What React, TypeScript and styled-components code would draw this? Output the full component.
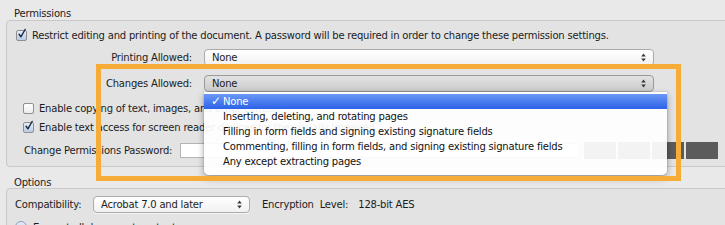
import React from 'react'
import styled, { createGlobalStyle } from 'styled-components'

const GlobalStyle = createGlobalStyle`
  body {
    margin: 0;
    background: #e9e9e9;
    font-family: "DejaVu Sans", "Liberation Sans", sans-serif;
    font-size: 10px;
    letter-spacing: -0.2px;
    color: #1c1c1c;
  }
`

const Page = styled.div`
  position: relative;
  width: 725px;
  height: 225px;
  overflow: hidden;
  background: #e9e9e9;
`

const SectionTitle = styled.div<{ $pad: number; $h: number }>`
  display: flex;
  align-items: center;
  box-sizing: border-box;
  height: ${p => p.$h}px;
  padding: ${p => p.$pad}px 0 0 14px;
  color: #222;
`

const GroupBox = styled.div<{ $pad: string }>`
  margin: 0 -20px 0 6px;
  border: 1px solid #c9c9c9;
  border-radius: 4px;
  background: #e3e3e3;
  padding: ${p => p.$pad};
`

const Row = styled.div<{ $top: number; $h: number; $indent?: number }>`
  display: flex;
  align-items: center;
  height: ${p => p.$h}px;
  margin-top: ${p => p.$top}px;
  padding-left: ${p => p.$indent || 0}px;
  white-space: nowrap;
`

const Box = styled.span<{ $checked?: boolean }>`
  display: inline-flex;
  align-items: center;
  justify-content: center;
  width: 11px;
  height: 11px;
  box-sizing: border-box;
  border: 1px solid #8f8f8f;
  border-radius: 2px;
  background: ${p => (p.$checked ? 'linear-gradient(#e4eefa, #b9cde6)' : 'linear-gradient(#ffffff, #ececec)')};
  margin-right: 5px;
  overflow: visible;
`

const Radio = styled.span`
  display: inline-block;
  width: 12px;
  height: 12px;
  box-sizing: border-box;
  border: 1px solid #8a9ab5;
  border-radius: 50%;
  background: linear-gradient(#e6eefa, #b5c8e4);
  margin-right: 6px;
`

const FieldLabel = styled.span<{ $w: number; $align?: string }>`
  display: inline-block;
  width: ${p => p.$w}px;
  text-align: ${p => p.$align || 'right'};
  flex-shrink: 0;
`

const Select = styled.div<{ $w: number; $pressed?: boolean; $ml: number }>`
  display: flex;
  align-items: center;
  justify-content: space-between;
  box-sizing: border-box;
  width: ${p => p.$w}px;
  height: 17px;
  margin-left: ${p => p.$ml}px;
  padding: 0 7px 0 7px;
  border: 1px solid ${p => (p.$pressed ? '#9a9a9a' : '#ababab')};
  border-radius: 4px;
  background: ${p =>
    p.$pressed ? 'linear-gradient(#e2e2e2, #cbcbcb)' : 'linear-gradient(#ffffff, #f1f1f1)'};
  box-shadow: 0 1px 0 rgba(255, 255, 255, 0.6);
  flex-shrink: 0;
`

const Input = styled.div`
  width: 400px;
  height: 15px;
  box-sizing: border-box;
  border: 1px solid #b5b5b5;
  background: #fff;
  flex-shrink: 0;
`

const Meter = styled.div`
  display: flex;
  gap: 2px;
  margin-left: 4px;
`

const MeterSeg = styled.div`
  width: 32px;
  height: 17px;
  background: #5b5b5b;
`

const Plain = styled.span<{ $ml?: number }>`
  margin-left: ${p => p.$ml || 0}px;
`

const Menu = styled.div`
  position: absolute;
  left: 204px;
  top: 92px;
  width: 463px;
  box-sizing: border-box;
  padding: 2px 0 6px;
  background: rgba(255, 255, 255, 0.93);
  border-radius: 0 0 5px 5px;
  box-shadow: 0 3px 7px rgba(0, 0, 0, 0.35), 0 0 0 1px rgba(0, 0, 0, 0.06);
  z-index: 2;
`

const MenuItem = styled.div<{ $active?: boolean }>`
  position: relative;
  height: 15px;
  line-height: 15px;
  padding-left: 19px;
  color: ${p => (p.$active ? '#fff' : '#111')};
  background: ${p => (p.$active ? 'linear-gradient(#6b98f6, #2c62e7)' : 'transparent')};
`

const Tick = styled.span`
  position: absolute;
  left: 7px;
  top: 0;
  font-size: 12px;
  font-weight: bold;
`

const Highlight = styled.div`
  position: absolute;
  left: 96px;
  top: 64px;
  width: 585px;
  height: 117px;
  box-sizing: border-box;
  border: 5px solid #f8ac38;
  z-index: 3;
  pointer-events: none;
`

const Arrows = () => (
  <svg width="5" height="9" viewBox="0 0 5 9">
    <path d="M2.5 0.5 L4.8 3.4 L0.2 3.4 Z" fill="#3a3a3a" />
    <path d="M2.5 8.5 L4.8 5.6 L0.2 5.6 Z" fill="#3a3a3a" />
  </svg>
)

const Check = () => (
  <svg width="11" height="13" viewBox="0 0 11 13" style={{ marginTop: -3, marginLeft: 1 }}>
    <path d="M1.5 7.5 L4 11 L9.8 1" fill="none" stroke="#1d2c44" strokeWidth="2" strokeLinecap="round" strokeLinejoin="round" />
  </svg>
)

const menuItems = [
  'None',
  'Inserting, deleting, and rotating pages',
  'Filling in form fields and signing existing signature fields',
  'Commenting, filling in form fields, and signing existing signature fields',
  'Any except extracting pages',
]

const App = () => {
  return (
    <>
      <GlobalStyle />
      <Page>
        <SectionTitle $h={20} $pad={6}>Permissions</SectionTitle>
        <GroupBox $pad="0 0 8px 9px">
          <Row $top={6} $h={16}>
            <Box $checked><Check /></Box>
            Restrict editing and printing of the document. A password will be required in order to change these permission settings.
          </Row>
          <Row $top={6} $h={17}>
            <FieldLabel $w={176}>Printing Allowed:</FieldLabel>
            <Select $w={450} $ml={12}>
              <span>None</span>
              <Arrows />
            </Select>
          </Row>
          <Row $top={9} $h={17}>
            <FieldLabel $w={176}>Changes Allowed:</FieldLabel>
            <Select $w={450} $ml={12} $pressed>
              <span>None</span>
              <Arrows />
            </Select>
          </Row>
          <Row $top={8} $h={16} $indent={7}>
            <Box />
            Enable copying of text, images, and other content
          </Row>
          <Row $top={3} $h={16} $indent={7}>
            <Box $checked><Check /></Box>
            Enable text access for screen reader devices for the visually impaired
          </Row>
          <Row $top={8} $h={15} $indent={8}>
            <FieldLabel $w={156} $align="left">Change Permissions Password:</FieldLabel>
            <Input />
            <Meter>
              <MeterSeg />
              <MeterSeg />
              <MeterSeg />
              <MeterSeg />
            </Meter>
          </Row>
        </GroupBox>

        <SectionTitle $h={21} $pad={9}>Options</SectionTitle>
        <GroupBox $pad="0 0 0 8px">
          <Row $top={7} $h={17}>
            <FieldLabel $w={78} $align="left">Compatibility:</FieldLabel>
            <Select $w={157} $ml={0}>
              <span>Acrobat 7.0 and later</span>
              <Arrows />
            </Select>
            <Plain $ml={12}>Encryption&nbsp;&nbsp;Level:</Plain>
            <Plain $ml={10}>128-bit AES</Plain>
          </Row>
          <Row $top={6} $h={16}>
            <Radio />
            Encrypt all document contents
          </Row>
        </GroupBox>

        <Menu>
          {menuItems.map((item, i) => (
            <MenuItem key={item} $active={i === 0}>
              {i === 0 && <Tick>✓</Tick>}
              {item}
            </MenuItem>
          ))}
        </Menu>
        <Highlight />
      </Page>
    </>
  )
}

export default App
